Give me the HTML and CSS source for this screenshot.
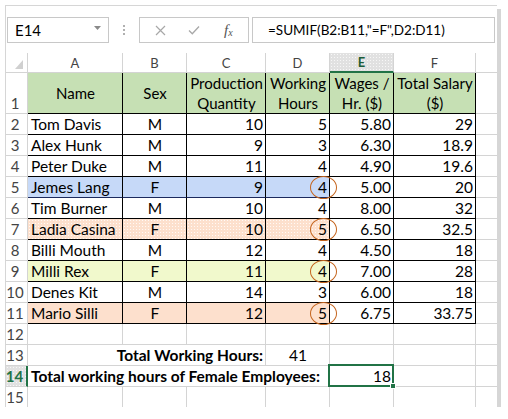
FILE: index.html
```html
<!DOCTYPE html>
<html>
<head>
<meta charset="utf-8">
<link rel="stylesheet" href="styles.css">
</head>
<body>
<div class="window">
  <div class="fbar">
    <div class="namebox"><span>E14</span><svg class="drop" width="7" height="4" viewBox="0 0 7 4"><path d="M0 0H7L3.5 4Z" fill="#8a8a8a"/></svg></div>
    <div class="sep"><i></i><i></i><i></i></div>
    <div class="btns">
      <svg class="ic" width="11" height="11" viewBox="0 0 11 11"><path d="M1 1L10 10M10 1L1 10" stroke="#a8a8a8" stroke-width="1.2" fill="none"/></svg>
      <svg class="ic" width="12" height="10" viewBox="0 0 12 10"><path d="M1 5.5L4.3 8.8L11 1.5" stroke="#a8a8a8" stroke-width="1.3" fill="none"/></svg>
      <span class="fx"><i>f</i><sub>x</sub></span>
    </div>
    <div class="formula">=SUMIF(B2:B11,"=F",D2:D11)</div>
  </div>
  <div class="sheet">
    <div class="c corner"><svg width="8" height="9" viewBox="0 0 8 9"><path d="M8 0V9H0Z" fill="#d0d0d0"/></svg></div>
    <div class="c ch">A</div><div class="c ch">B</div><div class="c ch">C</div><div class="c ch">D</div><div class="c ch sel">E</div><div class="c ch">F</div><div class="c ch last"></div>

    <div class="c rh">1</div>
    <div class="c t g m">Name</div><div class="c t g m">Sex</div>
    <div class="c t g m two">Production<br>Quantity</div>
    <div class="c t g m two">Working<br>Hours</div>
    <div class="c t g m two">Wages /<br>Hr. ($)</div>
    <div class="c t g m two">Total Salary<br>($)</div>
    <div class="c last"></div>

    <div class="c rh">2</div><div class="c t l">Tom Davis</div><div class="c t m">M</div><div class="c t r">10</div><div class="c t r">5</div><div class="c t r">5.80</div><div class="c t r">29</div><div class="c last"></div>
    <div class="c rh">3</div><div class="c t l">Alex Hunk</div><div class="c t m">M</div><div class="c t r">9</div><div class="c t r">3</div><div class="c t r">6.30</div><div class="c t r">18.9</div><div class="c last"></div>
    <div class="c rh">4</div><div class="c t l">Peter Duke</div><div class="c t m">M</div><div class="c t r">11</div><div class="c t r">4</div><div class="c t r">4.90</div><div class="c t r">19.6</div><div class="c last"></div>
    <div class="c rh">5</div><div class="c t l bl">Jemes Lang</div><div class="c t m bl">F</div><div class="c t r bl">9</div><div class="c t r bl">4<span class="ring"></span></div><div class="c t r">5.00</div><div class="c t r">20</div><div class="c last"></div>
    <div class="c rh">6</div><div class="c t l">Tim Burner</div><div class="c t m">M</div><div class="c t r">10</div><div class="c t r">4</div><div class="c t r">8.00</div><div class="c t r">32</div><div class="c last"></div>
    <div class="c rh">7</div><div class="c t l ord">Ladia Casina</div><div class="c t m ord">F</div><div class="c t r ord">10</div><div class="c t r ord">5<span class="ring"></span></div><div class="c t r">6.50</div><div class="c t r">32.5</div><div class="c last"></div>
    <div class="c rh">8</div><div class="c t l">Billi Mouth</div><div class="c t m">M</div><div class="c t r">12</div><div class="c t r">4</div><div class="c t r">4.50</div><div class="c t r">18</div><div class="c last"></div>
    <div class="c rh">9</div><div class="c t l ye">Milli Rex</div><div class="c t m ye">F</div><div class="c t r ye">11</div><div class="c t r ye">4<span class="ring"></span></div><div class="c t r">7.00</div><div class="c t r">28</div><div class="c last"></div>
    <div class="c rh">10</div><div class="c t l">Denes Kit</div><div class="c t m">M</div><div class="c t r">14</div><div class="c t r">3</div><div class="c t r">6.00</div><div class="c t r">18</div><div class="c last"></div>
    <div class="c rh">11</div><div class="c t l or">Mario Silli</div><div class="c t m or">F</div><div class="c t r or">12</div><div class="c t r or">5<span class="ring"></span></div><div class="c t r">6.75</div><div class="c t r">33.75</div><div class="c last"></div>

    <div class="c rh">12</div><div class="c"></div><div class="c"></div><div class="c"></div><div class="c"></div><div class="c"></div><div class="c"></div><div class="c last"></div>
    <div class="c rh">13</div><div class="c r b span3">Total Working Hours:</div><div class="c m">41</div><div class="c"></div><div class="c"></div><div class="c last"></div>
    <div class="c rh rsel">14</div><div class="c l b span4">Total working hours of Female Employees:</div><div class="c r">18<span class="selbox"><span class="handle"></span></span></div><div class="c"></div><div class="c last"></div>
    <div class="c rh">15</div><div class="c"></div><div class="c"></div><div class="c"></div><div class="c"></div><div class="c"></div><div class="c"></div><div class="c last"></div>
  </div>
</div>
</body>
</html>
```

FILE: styles.css
```css
* { box-sizing: border-box; }
body { margin: 0; background: #fff; font-family: Lato, "Open Sans", sans-serif; color: #000; }

.window {
  margin: 5px 0 0 5px;
  width: 492px;
  height: 402px;
  border-top: 1px solid #d6d6d6;
  border-left: 1px solid #d6d6d6;
  box-shadow: 4px 4px 0 #d6d6d6;
  overflow: hidden;
  background: #fff;
}

.fbar { display: flex; align-items: center; height: 26px; margin: 11px 0 10px 1px; }
.namebox {
  width: 102px; height: 26px; border: 1px solid #c8c8c8;
  display: flex; align-items: center; justify-content: space-between;
  padding: 0 7px 0 7px; font-size: 15px;
}
.drop { margin-top: -4px; }
.sep { width: 30px; display: flex; flex-direction: column; align-items: center; gap: 2px; }
.sep i { display: block; width: 2px; height: 2px; background: #b0b0b0; }
.btns {
  width: 110px; height: 26px; border: 1px solid #c8c8c8;
  display: flex; align-items: center; padding-left: 15px; gap: 22px;
}
.fx { font-family: "Liberation Serif", serif; font-size: 15px; color: #555; margin-left: 2px; }
.fx sub { font-size: 10px; font-style: italic; vertical-align: -1px; }
.formula {
  width: 243px; height: 26px; margin-left: 3px; border: 1px solid #c8c8c8;
  display: flex; align-items: center; padding-left: 15px; font-size: 13.5px;
}

.sheet {
  display: grid;
  grid-template-columns: 22px 95px 64px 79px 64px 64px 82px 1fr;
  grid-template-rows: 20px 41px repeat(14, 21px);
}
.c {
  position: relative;
  border-right: 1px solid #d4d4d4;
  border-bottom: 1px solid #d4d4d4;
  display: flex; align-items: flex-end;
  padding: 0 2px 1px 3px;
  font-size: 15.5px; line-height: 18px;
  white-space: nowrap;
}
.c.last { border-right: none; }
.ch { justify-content: center; align-items: center; font-size: 13px; color: #444; padding: 0; }
.ch.sel {
  font-weight: bold; color: #1d5c38;
  border-bottom: 2px solid #217346;
  background-color: #e1e1e1;
  background-image: radial-gradient(circle, rgba(255,255,255,.75) 0.6px, transparent 0.9px);
  background-size: 3px 3px;
}
.corner { align-items: flex-end; justify-content: flex-end; padding: 0 4px 3px 0; }
.rh { justify-content: center; color: #444; padding: 0 3px 1px 0; font-size: 15px; }
.rh.rsel {
  font-weight: bold; color: #217346;
  border-right: 2px solid #217346;
  background-color: #e1e1e1;
  background-image: radial-gradient(circle, rgba(255,255,255,.75) 0.6px, transparent 0.9px);
  background-size: 3px 3px;
}

.t { border-right-color: #000; border-bottom-color: #000; }
.l { justify-content: flex-start; }
.m { justify-content: center; }
.r { justify-content: flex-end; }
.g { background: #c6e0b4; align-items: center; padding-bottom: 0; font-size: 15px; }
.two { line-height: 20px; text-align: center; }
.bl { background: #c6d9f8; border-bottom-color: #1c2a5e; }
.or { background: #fde0cd; }
.ord {
  background-color: #fde0cd;
  background-image: radial-gradient(circle, rgba(255,255,255,.8) 0.6px, transparent 0.9px);
  background-size: 3px 3px;
}
.ye { background: #f1f9cc; }
.b { font-weight: bold; }
.span3 { grid-column: span 3; }
.span4 { grid-column: span 4; }

.ring {
  position: absolute; z-index: 2;
  left: 44px; top: -1px; width: 27px; height: 23px;
  border: 1.5px solid #c5651e; border-radius: 50%;
}
.selbox {
  position: absolute; z-index: 3;
  left: -2px; top: -2px; right: -1px; bottom: -1px;
  border: 2px solid #217346;
}
.handle {
  position: absolute; right: -4px; bottom: -4px;
  width: 6px; height: 6px; background: #217346; border: 1px solid #fff;
}
```
